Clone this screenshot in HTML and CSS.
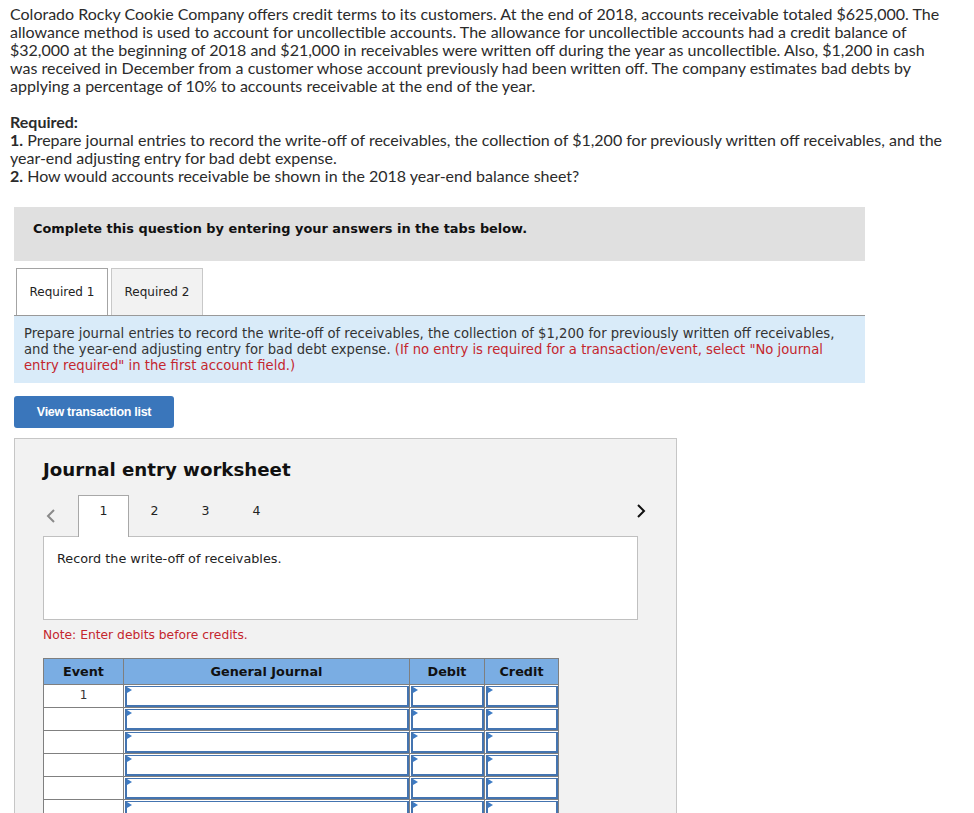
FILE: index.html
```html
<!DOCTYPE html>
<html lang="en">
<head>
  <meta charset="UTF-8" />
  <title>Journal entry worksheet</title>
  <link rel="stylesheet" href="styles.css">
</head>
<body>
  <div class="question">
    <p>Colorado Rocky Cookie Company offers credit terms to its customers. At the end of 2018, accounts receivable totaled $625,000. The allowance method is used to account for uncollectible accounts. The allowance for uncollectible accounts had a credit balance of $32,000 at the beginning of 2018 and $21,000 in receivables were written off during the year as uncollectible. Also, $1,200 in cash was received in December from a customer whose account previously had been written off. The company estimates bad debts by applying a percentage of 10% to accounts receivable at the end of the year.</p>
    <div class="required">
      <div><strong>Required:</strong></div>
      <div><strong>1.</strong> Prepare journal entries to record the write-off of receivables, the collection of $1,200 for previously written off receivables, and the year-end adjusting entry for bad debt expense.</div>
      <div><strong>2.</strong> How would accounts receivable be shown in the 2018 year-end balance sheet?</div>
    </div>
  </div>

  <div class="answer">
    <div class="banner">Complete this question by entering your answers in the tabs below.</div>

    <div class="req-tabs">
      <div class="req-tab active">Required 1</div>
      <div class="req-tab">Required 2</div>
    </div>

    <div class="instructions">
      Prepare journal entries to record the write-off of receivables, the collection of $1,200 for previously written off receivables, and the year-end adjusting entry for bad debt expense. <span class="red">(If no entry is required for a transaction/event, select "No journal entry required" in the first account field.)</span>
    </div>

    <button class="btn">View transaction list</button>

    <div class="worksheet">
      <h2>Journal entry worksheet</h2>

      <div class="steps">
        <span class="arrow prev">
          <svg width="10" height="16" viewBox="0 0 10 16"><path d="M8 2 L2 8 L8 14" fill="none" stroke="#8a8a8a" stroke-width="2"/></svg>
        </span>
        <div class="step active">1</div>
        <div class="step">2</div>
        <div class="step">3</div>
        <div class="step">4</div>
        <span class="arrow next">
          <svg width="10" height="16" viewBox="0 0 10 16"><path d="M2 2 L8 8 L2 14" fill="none" stroke="#111" stroke-width="2"/></svg>
        </span>
      </div>

      <div class="step-box">Record the write-off of receivables.</div>

      <p class="note">Note: Enter debits before credits.</p>

      <table class="journal">
        <thead>
          <tr>
            <th class="c-event">Event</th>
            <th class="c-gj">General Journal</th>
            <th class="c-debit">Debit</th>
            <th class="c-credit">Credit</th>
          </tr>
        </thead>
        <tbody>
          <tr><td class="event">1</td><td><div class="field"></div></td><td><div class="field"></div></td><td><div class="field"></div></td></tr>
          <tr><td class="event"></td><td><div class="field"></div></td><td><div class="field"></div></td><td><div class="field"></div></td></tr>
          <tr><td class="event"></td><td><div class="field"></div></td><td><div class="field"></div></td><td><div class="field"></div></td></tr>
          <tr><td class="event"></td><td><div class="field"></div></td><td><div class="field"></div></td><td><div class="field"></div></td></tr>
          <tr><td class="event"></td><td><div class="field"></div></td><td><div class="field"></div></td><td><div class="field"></div></td></tr>
          <tr><td class="event"></td><td><div class="field"></div></td><td><div class="field"></div></td><td><div class="field"></div></td></tr>
          <tr><td class="event"></td><td><div class="field"></div></td><td><div class="field"></div></td><td><div class="field"></div></td></tr>
        </tbody>
      </table>
    </div>
  </div>
</body>
</html>
```

FILE: styles.css
```css
body {
  margin: 0;
  font-family: "Lato", "Open Sans", sans-serif;
  color: #2b2b2b;
  background: #fff;
}
.question {
  padding: 5px 0 0 10px;
  width: 935px;
}
.question p,
.question .required {
  margin: 0;
  font-size: 16px;
  line-height: 18px;
}
.question .required {
  margin-top: 18px;
}
.answer {
  margin: 22px 0 0 14px;
  width: 851px;
  font-family: "DejaVu Sans", Verdana, sans-serif;
  font-size: 12px;
  color: #222;
}
.banner {
  background: #e0e0e0;
  height: 54px;
  line-height: 44px;
  padding-left: 19px;
  font-weight: bold;
  font-size: 12.9px;
  color: #111;
}
.req-tabs {
  display: flex;
  gap: 3px;
  margin-top: 7px;
  padding-left: 2px;
}
.req-tab {
  width: 90px;
  height: 46px;
  line-height: 46px;
  text-align: center;
  border: 1px solid #c8c8c8;
  border-bottom: none;
  background: #f2f2f2;
  font-size: 12px;
}
.req-tab.active {
  background: #fff;
  border-color: #a4a4a4;
}
.instructions {
  background: #d9ebf9;
  border-top: 1px solid #999;
  padding: 10px 26px 11px 10px;
  line-height: 16px;
  font-size: 13.2px;
  color: #333;
  height: 46px;
}
.red {
  color: #c4262e;
}
.btn {
  display: block;
  margin-top: 13px;
  width: 160px;
  height: 32px;
  border: none;
  border-radius: 3px;
  background: #3a76bb;
  color: #fff;
  font-family: "Liberation Sans", Arial, sans-serif;
  font-weight: bold;
  font-size: 12.5px;
  letter-spacing: -0.3px;
}
.worksheet {
  margin-top: 10px;
  width: 633px;
  height: 380px;
  overflow: hidden;
  background: #f2f2f2;
  border: 1px solid #c6c6c6;
  padding: 0 0 0 28px;
}
.worksheet h2 {
  margin: 19px 0 0;
  font-size: 18.2px;
  line-height: 24px;
  color: #111;
}
.steps {
  display: flex;
  align-items: flex-end;
  height: 41px;
  margin-top: 13px;
  position: relative;
  z-index: 1;
}
.arrow {
  display: flex;
  align-items: center;
  height: 30px;
  padding-bottom: 10px;
}
.arrow.prev {
  width: 35px;
  padding-left: 3px;
  box-sizing: border-box;
}
.arrow.next {
  margin-left: auto;
  margin-right: 30px;
}
.step {
  width: 51px;
  height: 40px;
  line-height: 30px;
  text-align: center;
  font-size: 12.5px;
  box-sizing: border-box;
}
.step.active {
  background: #fff;
  border: 1px solid #a8a8a8;
  border-bottom: none;
  height: 42px;
  margin-bottom: -1px;
}
.step-box {
  width: 595px;
  height: 84px;
  box-sizing: border-box;
  background: #fff;
  border: 1px solid #c0c0c0;
  padding: 14px 13px;
  font-size: 12.8px;
  color: #222;
}
.note {
  margin: 7px 0 0;
  font-size: 12.3px;
  line-height: 17px;
  color: #c4262e;
}
.journal {
  margin-top: 14px;
  border-collapse: collapse;
  table-layout: fixed;
}
.journal th {
  background: #7aade3;
  border: 1px solid #7f7f7f;
  height: 25px;
  font-size: 12.8px;
  font-weight: bold;
  color: #111;
  padding: 0;
}
.c-event { width: 79px; }
.c-gj { width: 285px; }
.c-debit { width: 74px; }
.c-credit { width: 73px; }
.journal td {
  border: 1px solid #808080;
  background: #fff;
  height: 22px;
  padding: 0;
}
.journal td.event {
  text-align: center;
  vertical-align: top;
  font-size: 12px;
  line-height: 20px;
  color: #333;
}
.field {
  position: relative;
  height: 18px;
  border: 2px solid #4474b0;
  border-top-width: 1px;
  margin-left: 1px;
}
.field::before {
  content: "";
  position: absolute;
  left: 0;
  top: 0;
  border-left: 5px solid #3d7bc4;
  border-top: 3px solid transparent;
  border-bottom: 3px solid transparent;
}
```
